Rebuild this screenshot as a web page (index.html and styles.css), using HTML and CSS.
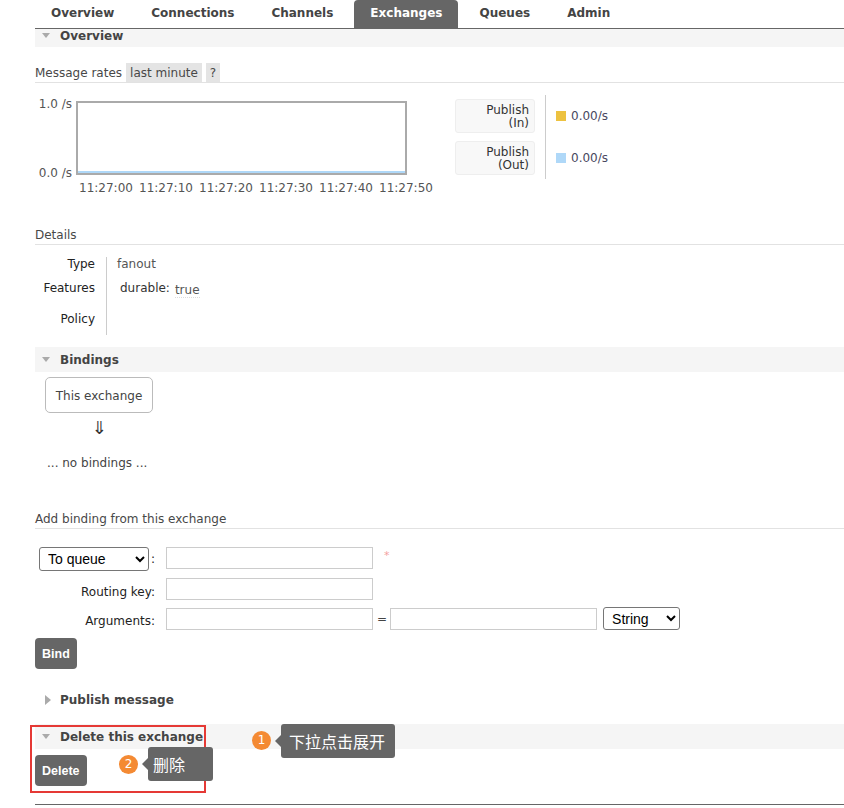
FILE: index.html
```html
<!DOCTYPE html>
<html>
<head>
<meta charset="utf-8">
<title>Exchange</title>
<link rel="stylesheet" href="styles.css">
</head>
<body>
<div class="page">
  <nav class="tabs">
    <a class="tab">Overview</a>
    <a class="tab">Connections</a>
    <a class="tab">Channels</a>
    <a class="tab active">Exchanges</a>
    <a class="tab">Queues</a>
    <a class="tab">Admin</a>
  </nav>

  <div class="sec-head cut"><span class="tri-down"></span>Overview</div>

  <div class="subhead"><span>Message rates</span><span class="badge">last minute</span><span class="badge">?</span></div>

  <div class="rates">
    <div class="chart">
      <div class="y-axis"><span>1.0 /s</span><span>0.0 /s</span></div>
      <div class="plot"><div class="plot-line"></div></div>
      <div class="x-axis"><span>11:27:00</span><span>11:27:10</span><span>11:27:20</span><span>11:27:30</span><span>11:27:40</span><span>11:27:50</span></div>
    </div>
    <div class="legend">
      <div class="lg-label">Publish<br>(In)</div>
      <div class="lg-value"><i class="sw sw-in"></i>0.00/s</div>
      <div class="lg-label">Publish<br>(Out)</div>
      <div class="lg-value"><i class="sw sw-out"></i>0.00/s</div>
    </div>
  </div>

  <div class="subhead details-head"><span>Details</span></div>

  <div class="facts">
    <div class="fk row1">Type</div><div class="fv row1">fanout</div>
    <div class="fk row2">Features</div><div class="fv row2"><span class="feat">durable:</span><span class="argval">true</span></div>
    <div class="fk row3">Policy</div><div class="fv row3"></div>
  </div>

  <div class="sec-head bindings-head"><span class="tri-down"></span>Bindings</div>
  <div class="xbox">This exchange</div>
  <div class="arrow">&#8659;</div>
  <div class="nobind">... no bindings ...</div>

  <div class="subhead add-head"><span>Add binding from this exchange</span></div>

  <div class="form">
    <div class="frow">
      <div class="flabel first"><select class="sel-dest"><option>To queue</option></select>:</div>
      <input class="fin" type="text">
      <span class="req">*</span>
    </div>
    <div class="frow">
      <label class="flabel">Routing key:</label>
      <input class="fin" type="text">
    </div>
    <div class="frow">
      <label class="flabel">Arguments:</label>
      <input class="fin" type="text">
      <span class="eq">=</span>
      <input class="fin" type="text">
      <select class="sel-type"><option>String</option></select>
    </div>
  </div>

  <button class="btn bind-btn">Bind</button>

  <div class="sec-head closed publish-head"><span class="tri-right"></span>Publish message</div>
  <div class="sec-head delete-head"><span class="tri-down"></span>Delete this exchange</div>
  <button class="btn del-btn">Delete</button>
  <div class="end-rule"></div>

  <div class="mark-box"></div>
  <div class="num num1">1</div>
  <div class="tip tip1">下拉点击展开</div>
  <div class="num num2">2</div>
  <div class="tip tip2">删除</div>
</div>
</body>
</html>
```
FILE: styles.css
```css
* { box-sizing: border-box; }
html, body { margin: 0; padding: 0; background: #fff; }
body {
  font-family: "DejaVu Sans", Verdana, sans-serif;
  font-size: 12px;
  color: #484848;
}
.page {
  position: relative;
  width: 844px;
  height: 808px;
  padding-left: 35px;
  overflow: hidden;
}

/* tabs */
.tabs {
  display: flex;
  gap: 5px;
  height: 29px;
  border-bottom: 1px solid #666;
}
.tab {
  display: block;
  padding: 0 16px;
  line-height: 27px;
  height: 28px;
  font-weight: bold;
  color: #444;
  border-radius: 4px 4px 0 0;
}
.tab.active { background: #666; color: #fff; }

/* section heads */
.sec-head {
  height: 25px;
  line-height: 14px;
  padding-top: 1px;
  background: #f5f5f5;
  font-weight: bold;
  color: #444;
  padding-left: 7px;
  display: flex;
  align-items: center;
}
.sec-head.cut {
  height: 18px;
  line-height: 13px;
  align-items: flex-start;
  padding-top: 1px;
}
.sec-head.cut .tri-down { margin-top: 3px; }
.tri-down {
  width: 0; height: 0;
  border-left: 4px solid transparent;
  border-right: 4px solid transparent;
  border-top: 5px solid #aaa;
  margin-right: 10px;
  margin-top: -1px;
}
.tri-right {
  width: 0; height: 0;
  border-top: 5px solid transparent;
  border-bottom: 5px solid transparent;
  border-left: 6px solid #aaa;
  margin-left: 3px;
  margin-right: 9px;
  margin-top: -1px;
}
.sec-head.closed { background: #fff; }

/* sub heads */
.subhead {
  display: flex;
  gap: 4px;
  height: 20px;
  line-height: 18px;
  border-bottom: 1px solid #e2e2e2;
  margin-top: 16px;
  color: #484848;
}
.subhead span { padding-top: 1px; }
.badge {
  background: #e4e4e4;
  padding: 0 4px;
  color: #484848;
}

/* rates */
.rates {
  display: flex;
  margin-top: 12px;
}
.chart {
  display: grid;
  grid-template-columns: 41px 331px;
  grid-template-rows: 74px auto;
  padding-top: 6px;
  color: #545454;
}
.y-axis {
  height: 84px;
  margin: -5px 0;
  display: flex;
  flex-direction: column;
  justify-content: space-between;
  text-align: right;
  padding-right: 4px;
  padding-top: 1px;
  line-height: 14px;
}
.plot {
  border: 2px solid #aaa;
  display: flex;
  align-items: flex-end;
}
.plot-line { height: 2px; width: 100%; background: #afd8f8; }
.x-axis {
  grid-column: 2;
  display: flex;
  margin-top: 6px;
  padding-left: 3px;
  line-height: 14px;
}
.x-axis span { flex: 0 0 60px; white-space: nowrap; }

.legend {
  display: grid;
  grid-template-columns: 90px auto;
  margin-left: 48px;
  align-self: flex-start;
}
.lg-label {
  margin: 4px 10px 4px 0;
  width: 80px;
  background: #f8f8f8;
  border: 1px solid #eee;
  border-radius: 3px;
  text-align: right;
  padding: 4px 5px 2px;
  line-height: 13px;
  color: #333;
}
.lg-value {
  border-left: 1px solid #ccc;
  padding-left: 10px;
  display: flex;
  align-items: center;
  color: #484860;
}
.sw { display: inline-block; width: 10px; height: 10px; margin-right: 5px; }
.sw-in { background: #edc240; }
.sw-out { background: #afd8f8; }

/* details */
.details-head { margin-top: 30px; }
.facts {
  display: grid;
  grid-template-columns: 72px auto;
  margin-top: 12px;
  line-height: 13px;
}
.fk {
  text-align: right;
  padding-right: 11px;
  border-right: 1px solid #ccc;
  color: #222;
}
.fv { padding-left: 10px; color: #555; }
.row1 { height: 19px; padding-top: 1px; }
.row2 { height: 30px; padding-top: 6px; }
.row3 { height: 29px; padding-top: 7px; }
.feat { margin-left: 3px; color: #333; }
.argval {
  margin-left: 5px;
  display: inline-block;
  vertical-align: -2px;
  border-bottom: 1px dotted #ddd;
  color: #555;
}

/* bindings */
.bindings-head { margin-top: 12px; }
.xbox {
  margin: 5px 0 0 10px;
  width: 108px;
  border: 1px solid #bbb;
  border-radius: 5px;
  padding: 11px 0 9px;
  line-height: 14px;
  text-align: center;
  color: #444;
}
.arrow {
  margin: 5px 0 0 10px;
  width: 108px;
  text-align: center;
  font-size: 18px;
  line-height: 20px;
  color: #333;
}
.nobind { margin-top: 18px; padding-left: 12px; line-height: 14px; color: #444; }

.add-head { margin-top: 39px; }

/* form */
.form {
  margin-top: 18px;
  display: flex;
  flex-direction: column;
  gap: 7px;
}
.frow { display: flex; align-items: center; }
.flabel {
  width: 131px;
  padding-right: 11px;
  padding-top: 5px;
  line-height: 14px;
  text-align: right;
  color: #222;
}
.flabel.first {
  padding-top: 0;
  display: flex;
  justify-content: flex-end;
  align-items: center;
}
.fin {
  width: 207px;
  height: 22px;
  border: 1px solid #ccc;
  border-radius: 0;
  margin: 0;
  padding: 1px 3px;
  background: #fff;
}
.frow:first-child .fin { align-self: flex-start; }
select {
  font-family: "Liberation Sans", Arial, sans-serif;
  font-size: 14px;
  color: #000;
  background: #fff;
  border: 1px solid #767676;
  border-radius: 3px;
  padding: 0 4px;
  margin: 0;
}
.sel-dest { width: 110px; height: 24px; margin-right: 2px; }
.sel-type { width: 77px; height: 23px; margin-left: 6px; }
.req { margin-left: 11px; color: #f4a0a0; align-self: flex-start; line-height: 18px; font-size: 11px; }
.eq { margin: 0 3px 0 4px; color: #444; }

/* buttons */
.btn {
  display: block;
  height: 31px;
  padding: 0 7px;
  border: 0;
  border-radius: 4px;
  background: #666;
  color: #fff;
  font-family: "Liberation Sans", Arial, sans-serif;
  font-weight: bold;
  font-size: 12.5px;
}
.bind-btn { margin-top: 8px; }
.publish-head { margin-top: 18px; padding-left: 7px; }
.delete-head { margin-top: 12px; }
.del-btn { margin-top: 6px; }
.end-rule { margin-top: 18px; height: 1px; background: #666; }

/* annotations */
.mark-box {
  position: absolute;
  left: 30px; top: 725px;
  width: 176px; height: 68px;
  border: 2px solid #e53935;
}
.num {
  position: absolute;
  width: 19px; height: 19px;
  border-radius: 50%;
  background: #f48a33;
  color: #fff;
  font-size: 12px;
  line-height: 19px;
  text-align: center;
}
.num1 { left: 252px; top: 731px; }
.num2 { left: 119px; top: 755px; }
.tip {
  position: absolute;
  height: 34px;
  line-height: 34px;
  background: #666;
  color: #fff;
  border-radius: 3px;
  font-family: "Noto Sans CJK SC", "DejaVu Sans", sans-serif;
  font-size: 16px;
  white-space: nowrap;
}
.tip::before {
  content: "";
  position: absolute;
  left: -6px; top: 11px;
  border-top: 6px solid transparent;
  border-bottom: 6px solid transparent;
  border-right: 6px solid #666;
}
.tip1 { left: 281px; top: 724px; width: 114px; padding-left: 8px; }
.tip2 { left: 148px; top: 747px; width: 65px; padding-left: 5px; }
```
